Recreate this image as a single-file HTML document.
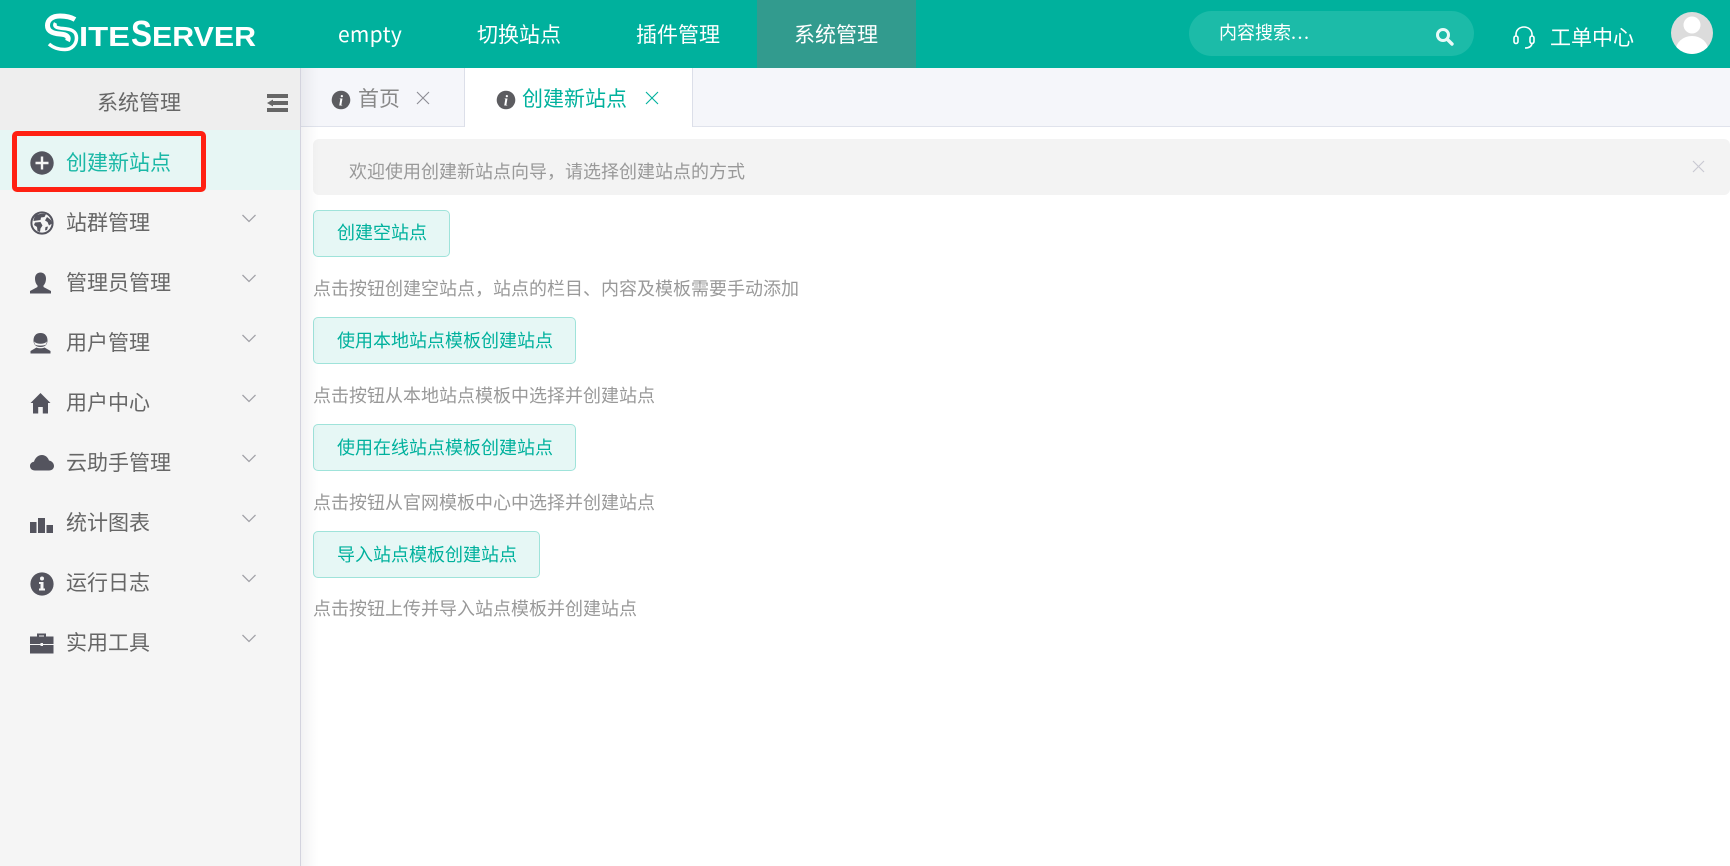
<!DOCTYPE html>
<html lang="zh">
<head>
<meta charset="utf-8">
<title>SiteServer</title>
<style>
html,body{margin:0;padding:0;width:1730px;height:866px;overflow:hidden;background:#fff}
body{position:relative;font-family:"Liberation Sans","Noto Sans CJK SC",sans-serif}
.b{position:absolute;box-sizing:border-box}
.t{position:absolute;white-space:nowrap;line-height:30px;font-family:"Noto Sans CJK SC","Liberation Sans",sans-serif}
.nav{font-size:21px;color:#fff;top:19px}
.side{font-size:21px;color:#666;left:66px}
.desc{font-size:18px;color:#999;left:313px}
.btn{position:absolute;box-sizing:border-box;left:313px;height:47px;background:#e6f7f5;border:1px solid #9fe3da;border-radius:5px}
.bt{font-size:18px;color:#00b19d;left:337px}
svg{position:absolute;display:block}
</style>
</head>
<body>
<!-- header -->
<div class="b" style="left:0;top:0;width:1730px;height:68px;background:#00b19d"></div>
<svg style="left:40px;top:10px" width="225" height="45" viewBox="0 0 225 45">
  <path d="M35 9.500C30 6.500 25 6 20 6 12 6 7.500 10 7.500 15.500 7.500 21.500 13 23.500 20 24 27 24.500 29.500 27 27.500 31" fill="none" stroke="#fff" stroke-width="5"/>
  <path d="M9 34C14 38.500 20 39.500 25 39.500 32 39.500 36.500 34 36.500 28 36.500 21 31 19 23 18.500 16 18 13.500 16.500 15.500 13" fill="none" stroke="#fff" stroke-width="3.500"/>
  <text x="39" y="36" font-family="Liberation Sans" font-weight="bold" font-size="28" fill="#fff" textLength="51" lengthAdjust="spacingAndGlyphs">ITE</text>
  <text x="91" y="36" font-family="Liberation Sans" font-weight="bold" font-size="36" fill="#fff" textLength="21" lengthAdjust="spacingAndGlyphs">S</text>
  <text x="112" y="36" font-family="Liberation Sans" font-weight="bold" font-size="28" fill="#fff" textLength="104" lengthAdjust="spacingAndGlyphs">ERVER</text>
</svg>
<div class="t nav" style="left:338px;letter-spacing:.3px">empty</div>
<div class="t nav" style="left:477px">切换站点</div>
<div class="t nav" style="left:636px">插件管理</div>
<div class="b" style="left:757px;top:0;width:159px;height:68px;background:#329b8e"></div>
<div class="t nav" style="left:794px">系统管理</div>
<div class="b" style="left:1189px;top:11px;width:285px;height:45px;border-radius:23px;background:#1cbba8"></div>
<div class="t" style="left:1219px;top:17px;font-size:18px;color:#fff">内容搜索<span style="letter-spacing:1.500px">...</span></div>
<svg style="left:1435px;top:27px" width="20" height="20" viewBox="0 0 20 20">
  <circle cx="8" cy="8" r="5.500" fill="none" stroke="#eafaf8" stroke-width="3"/>
  <path d="M12.500 12.500L17 17" stroke="#eafaf8" stroke-width="3.400" stroke-linecap="round"/>
</svg>
<svg style="left:1511px;top:24px" width="26" height="26" viewBox="0 0 26 26">
  <path d="M5 12V10.500C5 6 8.500 3 13 3S21 6 21 10.500V12" fill="none" stroke="#fff" stroke-width="1.600"/>
  <rect x="3" y="12" width="4" height="7.500" rx="2" fill="none" stroke="#fff" stroke-width="1.600"/>
  <rect x="19" y="12" width="4" height="7.500" rx="2" fill="none" stroke="#fff" stroke-width="1.600"/>
  <path d="M21 19.500C20.500 22.500 18 24 14 24" fill="none" stroke="#fff" stroke-width="1.600"/>
</svg>
<div class="t" style="left:1550px;top:22px;font-size:21px;color:#fff">工单中心</div>
<svg style="left:1671px;top:12px" width="42" height="42" viewBox="0 0 42 42">
  <defs><clipPath id="av"><circle cx="21" cy="21" r="21"/></clipPath></defs>
  <circle cx="21" cy="21" r="21" fill="#dcdcdc"/>
  <g clip-path="url(#av)" fill="#fff">
    <circle cx="21" cy="13" r="8.500"/>
    <ellipse cx="21" cy="39" rx="16.500" ry="15"/>
  </g>
</svg>

<!-- sidebar -->
<div class="b" style="left:0;top:68px;width:300px;height:798px;background:#f5f5f5"></div>
<div class="b" style="left:300px;top:68px;width:1px;height:798px;background:#d3d3de"></div>
<div class="b" style="left:0;top:68px;width:300px;height:62px;background:#eeeeee"></div>
<div class="t" style="left:97px;top:87px;font-size:21px;color:#666">系统管理</div>
<svg style="left:267px;top:94px" width="21" height="18" viewBox="0 0 21 18">
  <rect x="0" y="0" width="21" height="4" fill="#666"/>
  <rect x="6" y="7" width="15" height="4" fill="#666"/>
  <path d="M0 9L6 5.500V12.500Z" fill="#666"/>
  <rect x="0" y="14" width="21" height="4" fill="#666"/>
</svg>
<div class="b" style="left:0;top:130px;width:300px;height:60px;background:#e7f6f4"></div>

<!-- sidebar icons -->
<svg style="left:30px;top:151px" width="24" height="24" viewBox="0 0 24 24">
  <circle cx="12" cy="12" r="11.700" fill="#54545e"/>
  <path d="M12 5.500V18.500M5.500 12H18.500" stroke="#f5f5f5" stroke-width="2.400"/>
</svg>
<svg style="left:30px;top:211px" width="24" height="24" viewBox="0 0 24 24">
  <circle cx="12" cy="12" r="10.600" fill="#f5f5f5" stroke="#54545e" stroke-width="2"/>
  <path d="M6 4C9 3 13 2 16 3L14.500 6 11 6.500 10.500 9 7 9.500 3.500 10C3.500 8 5 5 6 4Z" fill="#54545e"/>
  <path d="M5 11.500L10.500 11 12.500 14.500 10.500 17.500 10 21 7.500 20 7 16 4 14Z" fill="#54545e"/>
  <path d="M17 6L21 9 22 12.500 19 14.500 17.500 11 15 9.500Z" fill="#54545e"/>
  <path d="M15.500 16L18 15.500 17 19 15 19.500Z" fill="#54545e"/>
</svg>
<svg style="left:30px;top:272px" width="22" height="22" viewBox="0 0 22 22">
  <path d="M10.500 0.500C14 0.500 16 3 16 6.500 16 9.500 15 12 13.500 13.500V15L21 19V21.500H0V19L7.500 15V13.500C6 12 5 9.500 5 6.500 5 3 7 0.500 10.500 0.500Z" fill="#54545e"/>
</svg>
<svg style="left:30px;top:332px" width="22" height="22" viewBox="0 0 22 22">
  <path d="M10.500 1C15 1 17.500 4 17.500 8.500 17.500 12 15.500 15 10.500 15 5.500 15 3.500 12 3.500 8.500 3.500 4 6 1 10.500 1Z" fill="#54545e"/>
  <path d="M4 9.500C7 12.500 14 12.500 17 9.500L16 12.500C14 14 7 14 5 12.500Z" fill="#f5f5f5"/>
  <path d="M6.500 15.500C8.500 16.500 12.500 16.500 14.500 15.500L20.500 19V21.500H0.500V19Z" fill="#54545e"/>
</svg>
<svg style="left:30px;top:392px" width="22" height="22" viewBox="0 0 22 22">
  <path d="M10.500 1L20.500 11H18V21.500H12.800V15H8.200V21.500H3V11H0.500Z" fill="#54545e"/>
</svg>
<svg style="left:30px;top:453px" width="24" height="18" viewBox="0 0 24 18">
  <path d="M5 17.500C2 17.500 0 15.500 0 13 0 10.500 2 9 4 8.800 5 5 8 2 12 2 15.500 2 18 4.500 19 7.500 22 8 24 10.500 24 13 24 15.500 22 17.500 19 17.500Z" fill="#54545e"/>
</svg>
<svg style="left:30px;top:517px" width="24" height="17" viewBox="0 0 24 17">
  <rect x="0" y="5" width="6.500" height="11" fill="#54545e"/>
  <rect x="8" y="1" width="7" height="15" fill="#54545e"/>
  <rect x="16.500" y="8" width="6.500" height="8" fill="#54545e"/>
</svg>
<svg style="left:30px;top:572px" width="24" height="24" viewBox="0 0 24 24">
  <circle cx="12" cy="12" r="11.600" fill="#54545e"/>
  <circle cx="12" cy="6.500" r="2" fill="#f5f5f5"/>
  <path d="M9 10H13.500V16.500H15V18.500H9V16.500H10.500V12H9Z" fill="#f5f5f5"/>
</svg>
<svg style="left:30px;top:632px" width="24" height="22" viewBox="0 0 24 22">
  <path d="M8 5V2.500H15V5" fill="none" stroke="#54545e" stroke-width="2"/>
  <rect x="0" y="4.500" width="23.500" height="7.500" fill="#54545e"/>
  <rect x="0" y="13" width="23.500" height="8.500" fill="#54545e"/>
  <rect x="10.500" y="11" width="2.500" height="3" fill="#f5f5f5"/>
</svg>

<!-- sidebar text -->
<div class="t side" style="top:147px;color:#1ab8a6">创建新站点</div>
<div class="t side" style="top:207px">站群管理</div>
<div class="t side" style="top:267px">管理员管理</div>
<div class="t side" style="top:327px">用户管理</div>
<div class="t side" style="top:387px">用户中心</div>
<div class="t side" style="top:447px">云助手管理</div>
<div class="t side" style="top:507px">统计图表</div>
<div class="t side" style="top:567px">运行日志</div>
<div class="t side" style="top:627px">实用工具</div>

<!-- chevrons -->
<svg style="left:241px;top:213px" width="16" height="430" viewBox="0 0 16 430" fill="none" stroke="#a2a2a8" stroke-width="1.300">
  <path d="M1.500 2L8 8.500 14.500 2"/><path d="M1.500 62L8 68.500 14.500 62"/><path d="M1.500 122L8 128.500 14.500 122"/>
  <path d="M1.500 182L8 188.500 14.500 182"/><path d="M1.500 242L8 248.500 14.500 242"/><path d="M1.500 302L8 308.500 14.500 302"/>
  <path d="M1.500 362L8 368.500 14.500 362"/><path d="M1.500 422L8 428.500 14.500 422"/>
</svg>

<!-- red highlight -->
<div class="b" style="left:12px;top:131px;width:194px;height:61px;border:5px solid #ff2112;border-radius:5px"></div>

<!-- tabs -->
<div class="b" style="left:301px;top:68px;width:1429px;height:59px;background:#f5f6fa;border-bottom:1px solid #e0e3ec"></div>
<div class="b" style="left:464px;top:68px;width:1px;height:59px;background:#dcdfe9"></div>
<div class="b" style="left:465px;top:68px;width:228px;height:59px;background:#fff;border-right:1px solid #dcdfe9"></div>
<svg style="left:331px;top:90px" width="20" height="20" viewBox="0 0 20 20">
  <circle cx="10" cy="10" r="9.300" fill="#5c5c60"/>
  <text x="10" y="15.500" text-anchor="middle" font-family="Liberation Serif" font-style="italic" font-weight="bold" font-size="15" fill="#fff">i</text>
</svg>
<div class="t" style="left:358px;top:83px;font-size:21px;color:#888">首页</div>
<svg style="left:416px;top:91px" width="14" height="14" viewBox="0 0 14 14"><path d="M1 1L13 13M13 1L1 13" stroke="#8d8d95" stroke-width="1.100"/></svg>
<svg style="left:496px;top:90px" width="20" height="20" viewBox="0 0 20 20">
  <circle cx="10" cy="10" r="9.300" fill="#5c5c60"/>
  <text x="10" y="15.500" text-anchor="middle" font-family="Liberation Serif" font-style="italic" font-weight="bold" font-size="15" fill="#fff">i</text>
</svg>
<div class="t" style="left:522px;top:83px;font-size:21px;color:#00b19d">创建新站点</div>
<svg style="left:645px;top:91px" width="14" height="14" viewBox="0 0 14 14"><path d="M1 1L13 13M13 1L1 13" stroke="#00b19d" stroke-width="1.100"/></svg>

<!-- alert -->
<div class="b" style="left:313px;top:139px;width:1417px;height:56px;background:#f3f3f3;border-radius:6px"></div>
<div class="t" style="left:349px;top:156px;font-size:18px;color:#999">欢迎使用创建新站点向导，请选择创建站点的方式</div>
<svg style="left:1692px;top:160px" width="13" height="13" viewBox="0 0 13 13"><path d="M1 1L12 12M12 1L1 12" stroke="#c9c9d2" stroke-width="1.200"/></svg>

<!-- content -->
<div class="btn" style="top:210px;width:137px"></div>
<div class="t bt" style="top:217px">创建空站点</div>
<div class="t desc" style="top:273px">点击按钮创建空站点，站点的栏目、内容及模板需要手动添加</div>
<div class="btn" style="top:317px;width:263px"></div>
<div class="t bt" style="top:325px">使用本地站点模板创建站点</div>
<div class="t desc" style="top:380px">点击按钮从本地站点模板中选择并创建站点</div>
<div class="btn" style="top:424px;width:263px"></div>
<div class="t bt" style="top:432px">使用在线站点模板创建站点</div>
<div class="t desc" style="top:487px">点击按钮从官网模板中心中选择并创建站点</div>
<div class="btn" style="top:531px;width:227px"></div>
<div class="t bt" style="top:539px">导入站点模板创建站点</div>
<div class="t desc" style="top:593px">点击按钮上传并导入站点模板并创建站点</div>

<!-- inner shadow -->
<div class="b" style="left:301px;top:68px;width:18px;height:798px;background:linear-gradient(to right,rgba(0,0,20,.05),rgba(0,0,20,.012) 70%,rgba(0,0,20,0))"></div>
</body>
</html>
